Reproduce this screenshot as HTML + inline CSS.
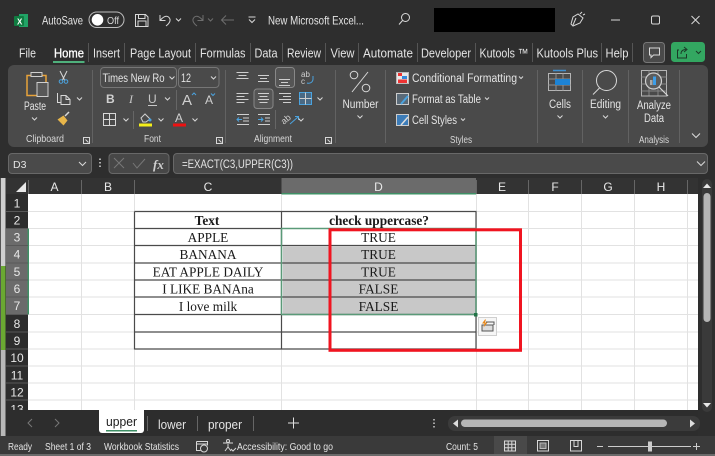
<!DOCTYPE html>
<html><head><meta charset="utf-8"><style>
html,body{margin:0;padding:0;background:#2e2e2e;width:715px;height:456px;overflow:hidden}
svg{display:block;position:absolute;left:0;top:0;filter:blur(.3px)}
text{font-family:"Liberation Sans",sans-serif;font-size:11px;fill:#e4e4e4}
.s{font-family:"Liberation Serif",serif;fill:#1a1a1a;font-size:13.3px;text-anchor:middle}
.h{fill:#e8e8e8;font-size:12px;text-anchor:middle}
.i{fill:none;stroke:#d0d0d0;stroke-width:1}
.c{fill:none;stroke:#d8d8d8;stroke-width:1}
.g{stroke:#e2e2e2;stroke-width:1}
.sp{stroke:#5e5e5e;stroke-width:1}
</style></head><body>
<svg width="715" height="456" viewBox="0 0 715 456" xmlns="http://www.w3.org/2000/svg">
<rect width="715" height="456" fill="#2e2e2e"/>

<!-- title bar -->
<path d="M19 14h9v13h-9z" fill="#21a366"/><rect x="14" y="16" width="10" height="10" rx="1" fill="#107c41"/>
<text x="17" y="24.500" style="font-size:8px;font-weight:bold;fill:#fff">X</text>
<text x="42" y="24.500" textLength="41" lengthAdjust="spacingAndGlyphs" style="font-size:12px">AutoSave</text>
<rect x="89" y="12" width="35" height="15.500" rx="7.700" fill="#2e2e2e" stroke="#bdbdbd"/>
<circle cx="97.500" cy="19.800" r="5.800" fill="#fff"/>
<text x="107" y="24" textLength="12" lengthAdjust="spacingAndGlyphs" style="font-size:10px;fill:#d8d8d8">Off</text>
<path class="c" d="M135.500 14.500h10l2.500 2.500v9.500h-12.500zM138.500 14.500v4h6.500v-4M138 26.500v-5.500h8v5.500"/>
<path class="c" d="M160 15v5.500h5.500M160 20.500c3-3.500 6-5.500 8.500-3.500c3 2.500 1.500 6-2.500 9"/>
<path class="c" d="M176 18.500l2.500 2.500l2.500-2.500"/>
<path fill="none" stroke="#6e6e6e" d="M203 15v5.500h-5.500M203 20.500c-3-3.500-6-5.500-8.500-3.500c-3 2.500-1.500 6 2.500 9"/>
<path fill="none" stroke="#6e6e6e" d="M208 18.500l2.500 2.500l2.500-2.500"/>
<path fill="none" stroke="#6e6e6e" d="M234 20h-12.500M226 15.500l-4.500 4.500l4.500 4.500"/>
<path class="c" d="M248.500 17h7M249 19.500l3 3l3-3"/>
<text x="268" y="24.500" textLength="96" lengthAdjust="spacingAndGlyphs" style="font-size:12px">New Microsoft Excel...</text>
<circle cx="405.500" cy="17.500" r="4" class="c"/><path class="c" d="M402.500 20.500l-3.500 4"/>
<rect x="434" y="8" width="121" height="24" fill="#000"/>
<path class="c" d="M571 24l2-7l5-3l5 4l-3 5l-7 3zM576 18l-3 7M580 14l2-2M583 15l2-1"/>
<path stroke="#d8d8d8" d="M611 20h9"/>
<rect x="651.500" y="16" width="8" height="8" rx="1.500" class="c"/>
<path class="c" d="M691.500 16l8 8M699.500 16l-8 8"/>

<!-- tabs -->
<text x="19" y="57.500" textLength="17" lengthAdjust="spacingAndGlyphs" style="font-size:12.500px">File</text>
<text x="54" y="57.500" textLength="30" lengthAdjust="spacingAndGlyphs" style="font-size:12.500px;fill:#fff;stroke:#fff;stroke-width:.3">Home</text>
<text x="93" y="57.500" textLength="27" lengthAdjust="spacingAndGlyphs" style="font-size:12.500px">Insert</text>
<text x="130" y="57.500" textLength="61" lengthAdjust="spacingAndGlyphs" style="font-size:12.500px">Page Layout</text>
<text x="200" y="57.500" textLength="45.500" lengthAdjust="spacingAndGlyphs" style="font-size:12.500px">Formulas</text>
<text x="254.500" y="57.500" textLength="23" lengthAdjust="spacingAndGlyphs" style="font-size:12.500px">Data</text>
<text x="287" y="57.500" textLength="34" lengthAdjust="spacingAndGlyphs" style="font-size:12.500px">Review</text>
<text x="330.500" y="57.500" textLength="24" lengthAdjust="spacingAndGlyphs" style="font-size:12.500px">View</text>
<text x="363" y="57.500" textLength="50" lengthAdjust="spacingAndGlyphs" style="font-size:12.500px">Automate</text>
<text x="421" y="57.500" textLength="50" lengthAdjust="spacingAndGlyphs" style="font-size:12.500px">Developer</text>
<text x="479.500" y="57.500" textLength="49" lengthAdjust="spacingAndGlyphs" style="font-size:12.500px">Kutools ™</text>
<text x="536.500" y="57.500" textLength="61.500" lengthAdjust="spacingAndGlyphs" style="font-size:12.500px">Kutools Plus</text>
<text x="605.500" y="57.500" textLength="23" lengthAdjust="spacingAndGlyphs" style="font-size:12.500px">Help</text>
<rect x="53" y="61" width="31.500" height="2" fill="#4fb07c"/>
<path stroke="#555" d="M88.500 43v19M124.500 43v19M195.500 43v19M250.500 43v19M282.500 43v19M325.500 43v19M358.500 43v19M417.500 43v19M475.500 43v19M532.500 43v19M601.500 43v19M632.500 43v19"/>
<rect x="643.500" y="42.500" width="21" height="20" rx="3" fill="#4a4a4a" stroke="#777"/>
<path class="c" d="M649.500 48h10v7h-6l-2.500 2.500v-2.500h-1.500z"/>
<rect x="671" y="42" width="34" height="20" rx="3.500" fill="#33a761"/>
<path fill="none" stroke="#1b3a28" d="M679 50h-1.500v8h9v-4M681 54c0-3 2-4.500 5-4.500M684 47l3 2.500l-3 2.500"/>
<path fill="none" stroke="#1b3a28" d="M696 51l2.500 2.500l2.500-2.500"/>

<!-- ribbon -->
<rect x="8" y="65" width="700" height="82" rx="6" fill="#4a4a4a"/>
<path stroke="#626262" d="M92.500 70v73M225.500 70v73M335.500 70v73M385.500 70v73M537.500 70v73M582.500 70v73M628.500 70v73M679.500 70v73"/>

<!-- clipboard -->
<path d="M27 75.500h19v20h-19z" fill="none" stroke="#e8a33a" stroke-width="1.500"/>
<rect x="31" y="72.500" width="11" height="4" fill="#4a4a4a" stroke="#cfcfcf"/>
<rect x="37" y="82.500" width="11" height="14" fill="#585858" stroke="#cfcfcf"/>
<text x="24" y="110" textLength="22" lengthAdjust="spacingAndGlyphs" style="font-size:11.500px">Paste</text>
<path class="c" d="M32 117.500l2.500 2.500l2.500-2.500"/>
<path class="c" d="M60 71l4.500 9M67 71l-4.500 9"/>
<circle cx="61" cy="81.500" r="1.800" fill="none" stroke="#4aa3df"/><circle cx="66" cy="81.500" r="1.800" fill="none" stroke="#4aa3df"/>
<path class="c" d="M57.500 93v9.500h4M61 95.500h5l4 4v5h-9zM66 95.500v4h4"/>
<path class="c" d="M77 97.500l2.500 2.500l2.500-2.500"/>
<path d="M57.500 119.500l6-4l4 5l-4 5z" fill="#e8b64a"/><path stroke="#d8d8d8" stroke-width="1.500" d="M65 116l4-4"/>
<text x="26" y="142" textLength="38" lengthAdjust="spacingAndGlyphs" style="font-size:10.500px;fill:#d8d8d8">Clipboard</text>
<path class="c" d="M83.500 137.500h6v6h-6zM85.500 139.500l3 3"/>

<!-- font -->
<rect x="100.500" y="67.500" width="76" height="20" rx="3.500" fill="#4a4a4a" stroke="#767676"/>
<rect x="178.500" y="67.500" width="40.500" height="20" rx="3.500" fill="#4a4a4a" stroke="#767676"/>
<text x="102.500" y="82" textLength="62" lengthAdjust="spacingAndGlyphs" style="font-size:11.500px">Times New Ro</text>
<path class="c" d="M169.500 76.500l2.500 2.500l2.500-2.500"/>
<text x="181" y="82" textLength="10" lengthAdjust="spacingAndGlyphs" style="font-size:11.500px">12</text>
<path class="c" d="M211 76.500l2.500 2.500l2.500-2.500"/>
<text x="106" y="103" style="font-size:12px;font-weight:bold;fill:#d0d0d0">B</text>
<text x="129" y="103" style="font-size:12px;font-style:italic;font-family:'Liberation Serif',serif;fill:#c8c8c8">I</text>
<text x="148" y="103" style="font-size:12px;fill:#c8c8c8">U</text><path stroke="#c8c8c8" d="M148 105.500h9"/>
<path class="c" d="M165 97.500l2.500 2.500l2.500-2.500"/>
<path stroke="#666" d="M176.500 90v20"/>
<text x="182" y="105" style="font-size:15px;fill:#d0d0d0">A</text><path fill="none" stroke="#4aa3df" d="M192 95l2-2l2 2"/>
<text x="205" y="104" style="font-size:12px;fill:#d0d0d0">A</text><path fill="none" stroke="#4aa3df" d="M211 93.500l2 2l2-2"/>
<path class="c" d="M103.500 113.500h12v12h-12zM109.500 113.500v12M103.500 119.500h12"/>
<path class="c" d="M123.500 118.500l2.500 2.500l2.500-2.500"/>
<path stroke="#666" d="M133.500 111v18"/>
<path fill="none" stroke="#d0d0d0" d="M141 118l4-4l5 5l-4 3h-3z"/><circle cx="150" cy="120" r="1.500" fill="#4aa3df"/>
<rect x="139" y="123.500" width="13" height="3" fill="#f4ee1a"/>
<path class="c" d="M158.500 118.500l2.500 2.500l2.500-2.500"/>
<text x="175" y="122" style="font-size:12px;fill:#d0d0d0">A</text>
<rect x="173" y="123.500" width="13" height="3" fill="#ee1111"/>
<path class="c" d="M192.500 118.500l2.500 2.500l2.500-2.500"/>
<text x="144" y="142" textLength="17" lengthAdjust="spacingAndGlyphs" style="font-size:10.500px;fill:#d8d8d8">Font</text>
<path class="c" d="M216.500 137.500h6v6h-6zM218.500 139.500l3 3"/>

<!-- alignment -->
<rect x="275.500" y="67.500" width="19" height="20" rx="3" fill="#555" stroke="#888"/>
<rect x="254" y="89" width="19" height="19.500" rx="3" fill="#555" stroke="#888"/>
<g stroke="#cfcfcf" stroke-width="1">
<path d="M236.500 72.500h12M238.500 75.500h8M236.500 78.500h12"/>
<path d="M258 75.500h11M260 78.500h7M258 81.500h11"/>
<path d="M279 79.500h11M281 82.500h7M279 85.500h11"/>
<path d="M236.500 93.500h12M236.500 96.500h8M236.500 99.500h12M236.500 102.500h8"/>
<path d="M258 93.500h11M259.500 96.500h8M258 99.500h11M259.500 102.500h8"/>
<path d="M279 93.500h12M283 96.500h8M279 99.500h12M283 102.500h8"/>
<path d="M237 114.500h12M243 118h6M243 121h6M237 124.500h12"/>
<path d="M258 114.500h12M265 118h5M265 121h5M258 124.500h12"/>
</g>
<path fill="none" stroke="#4aa3df" d="M237 119.500h5M239 117.500l-2 2l2 2M258 119.500h5M261 117.500l2 2l-2 2"/>
<text x="301" y="77" style="font-size:8px;fill:#d0d0d0">ab</text><text x="301" y="84" style="font-size:8px;fill:#d0d0d0">c</text>
<path fill="none" stroke="#4aa3df" d="M313 76v3c0 3-3 5-6 4"/>
<rect x="299.500" y="92.500" width="12" height="12" fill="#4a6a85" stroke="#4aa3df"/>
<path stroke="#d0d0d0" d="M299.500 98.500h12M305.500 92.500v12"/>
<path class="c" d="M317.500 97.500l2.500 2.500l2.500-2.500"/>
<path stroke="#666" d="M275.500 110v19"/>
<text x="281" y="123" transform="rotate(-40 285 120)" style="font-size:9px;fill:#d0d0d0">ab</text>
<path fill="none" stroke="#4aa3df" d="M290 124l8-7M295 116.500h3.500v3.500"/>
<path class="c" d="M298.500 118.500l2.500 2.500l2.500-2.500"/>
<text x="254" y="142" textLength="38" lengthAdjust="spacingAndGlyphs" style="font-size:10.500px;fill:#d8d8d8">Alignment</text>
<path class="c" d="M325.500 137.500h6v6h-6zM327.500 139.500l3 3"/>

<!-- number -->
<circle cx="354" cy="75" r="3.800" class="c"/><circle cx="366" cy="88" r="3.800" class="c"/><path stroke="#d8d8d8" d="M352 92l16-20"/>
<text x="342.500" y="108" textLength="36" lengthAdjust="spacingAndGlyphs" style="font-size:11.500px">Number</text>
<path class="c" d="M357.500 115.500l2.500 2.500l2.500-2.500"/>

<!-- styles -->
<rect x="396.500" y="72.500" width="12" height="11" fill="#e8e8e8" stroke="#bbb"/>
<rect x="398" y="73" width="4" height="3" fill="#e33"/><rect x="402" y="76" width="5" height="3" fill="#38d"/><rect x="398" y="79.500" width="9" height="3.500" fill="#e33"/>
<text x="412" y="82" textLength="105" lengthAdjust="spacingAndGlyphs" style="font-size:11.500px">Conditional Formatting</text>
<path class="c" d="M519 76.500l2 2l2-2"/>
<rect x="396.500" y="93.500" width="12" height="11" fill="#5a6a78" stroke="#ccc"/><path stroke="#4aa3df" stroke-width="2" d="M401 104l7-8"/>
<text x="412" y="103" textLength="69" lengthAdjust="spacingAndGlyphs" style="font-size:11.500px">Format as Table</text>
<path class="c" d="M485 97.500l2 2l2-2"/>
<rect x="396.500" y="114.500" width="12" height="11" fill="#3c7cb8" stroke="#ccc"/><path stroke="#ddd" stroke-width="1.500" d="M401 125l7-8"/>
<text x="412" y="124" textLength="45" lengthAdjust="spacingAndGlyphs" style="font-size:11.500px">Cell Styles</text>
<path class="c" d="M461 118.500l2 2l2-2"/>
<text x="450" y="143" textLength="22" lengthAdjust="spacingAndGlyphs" style="font-size:10.500px;fill:#d8d8d8">Styles</text>

<!-- cells -->
<path stroke="#3d8fd0" stroke-width="1.500" d="M553 70.500h13"/>
<rect x="548.500" y="73.500" width="22" height="17" fill="none" stroke="#b5b5b5"/>
<path stroke="#8e8e8e" d="M548.500 79h22M548.500 85h22M556 73.500v17M563 73.500v17"/>
<rect x="555" y="79" width="15" height="6" fill="#1d83d4"/>
<text x="549" y="108" textLength="22" lengthAdjust="spacingAndGlyphs" style="font-size:11.500px">Cells</text>
<path class="c" d="M557.500 115.500l2.500 2.500l2.500-2.500"/>

<!-- editing -->
<circle cx="606.500" cy="80.500" r="10" class="c"/><path class="c" d="M599.500 88l-6.500 6.500"/>
<text x="590" y="108" textLength="31" lengthAdjust="spacingAndGlyphs" style="font-size:11.500px">Editing</text>
<path class="c" d="M603 115.500l2.500 2.500l2.500-2.500"/>

<!-- analyze -->
<rect x="641.500" y="70.500" width="25" height="25.500" fill="#4a4a4a" stroke="#b5b5b5"/>
<path stroke="#858585" d="M641.500 77h25M641.500 84h25M641.500 91h25M649 70.500v25M658 70.500v25"/>
<circle cx="653.500" cy="81" r="8" fill="#5c5c5c" stroke="#d0d0d0" stroke-width="1.200"/>
<rect x="650" y="80" width="2.500" height="5" fill="#aaa"/><rect x="653" y="76.500" width="3" height="8.500" fill="#3d9ee8"/>
<path stroke="#d8d8d8" stroke-width="1.200" d="M659 87l9 9"/>
<text x="637" y="109" textLength="34" lengthAdjust="spacingAndGlyphs" style="font-size:11.500px">Analyze</text>
<text x="644" y="122" textLength="20" lengthAdjust="spacingAndGlyphs" style="font-size:11.500px">Data</text>
<text x="639" y="143" textLength="30" lengthAdjust="spacingAndGlyphs" style="font-size:10.500px;fill:#d8d8d8">Analysis</text>
<path fill="none" stroke="#ddd" d="M692 133.500l4 4l4-4"/>

<!-- formula bar -->
<rect x="8.500" y="153.500" width="83" height="20" rx="3.500" fill="#4a4a4a" stroke="#686868"/>
<text x="13" y="168" style="font-size:10.500px">D3</text>
<path class="c" d="M79 162l3.500 3.500l3.500-3.500"/>
<path stroke="#d8d8d8" stroke-dasharray="1.500 2" stroke-width="1.500" d="M100 158.500v10"/>
<rect x="109" y="153.500" width="60" height="20" rx="3.500" fill="#474747" stroke="#686868"/>
<path fill="none" stroke="#777" d="M114 158l10 10M124 158l-10 10M133 163l4 5l8-9"/>
<text x="153" y="169" style="font-size:13px;font-style:italic;font-weight:bold;font-family:'Liberation Serif',serif;fill:#cfcfcf">fx</text>
<rect x="173.500" y="153.500" width="534" height="20" rx="3.500" fill="#4a4a4a" stroke="#686868"/>
<text x="182" y="168" textLength="111" lengthAdjust="spacingAndGlyphs" style="font-size:11.500px">=EXACT(C3,UPPER(C3))</text>
<path class="c" d="M697 161.500l4 4l4-4"/>

<!-- sheet -->
<rect x="28" y="194" width="670" height="216" fill="#fff"/>
<g class="g">
<path d="M28 211.500h670M28 228.500h670M28 245.500h670M28 263h670M28 280h670M28 297h670M28 314.500h670M28 332h670M28 349h670M28 366h670M28 383h670M28 400h670"/>
<path d="M81.500 194v216M134.500 194v216M281.500 194v216M476.500 194v216M528.500 194v216M581.500 194v216M634.500 194v216M687.500 194v216"/>
</g>

<!-- left strip -->
<rect x="0" y="178" width="1" height="258" fill="#555"/>
<rect x="1" y="178" width="4.500" height="88" fill="#cfcfcf"/>
<rect x="1" y="266" width="4.500" height="84" fill="#6aa832"/>
<rect x="1" y="350" width="4.500" height="86" fill="#b8b8b8"/>

<!-- headers -->
<rect x="6" y="178" width="692" height="16" fill="#333"/>
<rect x="6" y="194" width="22" height="216" fill="#2d2d2d"/>
<rect x="281.500" y="178" width="194.500" height="15" fill="#6b6b6b"/>
<rect x="281.500" y="193" width="194.500" height="1.500" fill="#3f9066"/>
<rect x="6" y="228.500" width="22" height="86" fill="#6b6b6b"/>
<rect x="27.500" y="228.500" width="1.500" height="86" fill="#3f9066"/>
<path d="M26 182v10h-10z" fill="#e8e8e8"/>
<path stroke="#666" d="M28.500 180v14M81.500 180v14M134.500 180v14M476.500 180v14M528.500 180v14M581.500 180v14M634.500 180v14M687.500 180v14"/>
<path stroke="#585858" d="M6 211.500h22M6 228.500h22M6 245.500h22M6 263h22M6 280h22M6 297h22M6 314.500h22M6 332h22M6 349h22M6 366h22M6 383h22M6 400h22"/>
<text class="h" x="54.500" y="191">A</text><text class="h" x="108" y="191">B</text><text class="h" x="208" y="191">C</text><text class="h" x="378.500" y="191">D</text><text class="h" x="502" y="191">E</text><text class="h" x="555" y="191">F</text><text class="h" x="608" y="191">G</text><text class="h" x="661" y="191">H</text>
<text class="h" x="17" y="207.500">1</text><text class="h" x="17" y="224.500">2</text><text class="h" x="17" y="241.500">3</text><text class="h" x="17" y="258.500">4</text><text class="h" x="17" y="276">5</text><text class="h" x="17" y="293">6</text><text class="h" x="17" y="310">7</text><text class="h" x="17" y="328">8</text><text class="h" x="17" y="345">9</text><text class="h" x="17" y="362">10</text><text class="h" x="17" y="379.500">11</text><text class="h" x="17" y="396.500">12</text><text class="h" x="17" y="413.500">13</text>

<!-- table -->
<rect x="283" y="246.500" width="192.500" height="67.500" fill="#c8c8c8"/>
<g fill="none" stroke="#4a4a4a" stroke-width="1.200">
<path d="M134.500 211.500h342M134.500 228.500h147M134.500 245.500h342M134.500 263h342M134.500 280h342M134.500 297h342M134.500 314.500h342M134.500 332h342M134.500 349h342"/>
<path d="M134.500 211.500v138M281.500 211.500v138M476 211.500v138"/>
</g>
<path fill="none" stroke="#5a9a78" stroke-width="1.500" d="M281.500 228.500h194.500v86h-194.500z"/>
<rect x="474" y="313" width="3.500" height="3.500" fill="#217346"/>
<text class="s" x="207" y="225" style="font-weight:bold">Text</text>
<text class="s" x="379" y="225" style="font-weight:bold">check uppercase?</text>
<text class="s" x="208" y="242">APPLE</text><text class="s" x="208" y="259">BANANA</text><text class="s" x="208" y="276.500">EAT APPLE DAILY</text><text class="s" x="208" y="293.500">I LIKE BANAna</text><text class="s" x="208" y="311">I love milk</text>
<text class="s" x="378.500" y="242">TRUE</text><text class="s" x="378.500" y="259">TRUE</text><text class="s" x="378.500" y="276.500">TRUE</text><text class="s" x="378.500" y="293.500">FALSE</text><text class="s" x="378.500" y="311">FALSE</text>

<!-- quick analysis -->
<rect x="478.500" y="317.500" width="18" height="18" fill="#f6f6f6" stroke="#cfcfcf"/>
<rect x="482" y="325" width="11" height="6" fill="#ddd" stroke="#555"/><path fill="none" stroke="#555" d="M486 322h8v3"/>
<path d="M485 319.500l-3 4h2.500l-1 4l4-5h-2.500l1-3z" fill="#e8891c"/>

<!-- red box -->
<rect x="330" y="229.800" width="190.500" height="120.500" fill="none" stroke="#f01420" stroke-width="3"/>

<!-- scrollbar -->
<rect x="698" y="178" width="17" height="258" fill="#2e2e2e"/>
<rect x="702" y="179" width="10" height="233" rx="5" fill="#3a3a3a"/>
<rect x="703.500" y="193" width="7" height="129" rx="3.500" fill="#b5b5b5"/>
<path d="M703 188l4-4.500l4 4.500z" fill="#e8e8e8"/><path d="M703 403l4 4.500l4-4.500z" fill="#e8e8e8"/>

<!-- tabs bar -->
<rect x="6" y="410" width="692" height="26" fill="#2d2d2d"/>
<path d="M99 410h45v20a3 3 0 0 1-3 3h-39a3 3 0 0 1-3-3z" fill="#fff"/>
<text x="106" y="426" textLength="31" lengthAdjust="spacingAndGlyphs" style="font-size:13px;fill:#1a1a1a">upper</text>
<rect x="106" y="430" width="31" height="1.500" fill="#3f9066"/>
<text x="158" y="429" textLength="28" lengthAdjust="spacingAndGlyphs" style="font-size:13px">lower</text>
<text x="208" y="429" textLength="34" lengthAdjust="spacingAndGlyphs" style="font-size:13px">proper</text>
<path stroke="#666" d="M147.500 416v15M197.500 416v15M253.500 416v15"/>
<path stroke="#e0e0e0" d="M288 423h11M293.500 417.500v11"/>
<path fill="none" stroke="#777" d="M32 419l-4 4l4 4M55 419l4 4l-4 4"/>
<path stroke="#ccc" stroke-width="1.500" stroke-dasharray="1.500 2" d="M434 419v10"/>
<rect x="448" y="416" width="252" height="15" rx="7" fill="#3b3b3b"/>
<rect x="461" y="419.500" width="206" height="7.500" rx="3.700" fill="#b5b5b5"/>
<path d="M458 419.500v8l-5-4z" fill="#ddd"/><path d="M690 419.500v8l5-4z" fill="#ddd"/>

<!-- status bar -->
<rect x="0" y="436" width="715" height="18" fill="#3a3a3a"/>
<rect x="0" y="454" width="715" height="2" fill="#6a6a6a"/>
<text x="8" y="450" textLength="24" lengthAdjust="spacingAndGlyphs" style="font-size:10.500px">Ready</text>
<text x="45" y="450" textLength="46" lengthAdjust="spacingAndGlyphs" style="font-size:10.500px">Sheet 1 of 3</text>
<text x="104" y="450" textLength="75" lengthAdjust="spacingAndGlyphs" style="font-size:10.500px">Workbook Statistics</text>
<text x="237" y="450" textLength="96" lengthAdjust="spacingAndGlyphs" style="font-size:10.500px">Accessibility: Good to go</text>
<text x="446" y="450" textLength="32" lengthAdjust="spacingAndGlyphs" style="font-size:10.500px">Count: 5</text>
<path class="c" d="M196.500 441.500h11v4M196.500 441.500v9h4M196.500 444h11"/><circle cx="204" cy="448.500" r="3.500" class="c"/>
<circle cx="228" cy="441" r="1.500" class="c"/><path class="c" d="M223 443h10M228 444v3l-3 4M228 447l3 4M231 449l2 2l3-3"/>
<rect x="494" y="436" width="33" height="18" fill="#494949"/>
<path class="c" d="M504.500 441h11v10h-11zM504.500 444.300h11M504.500 447.700h11M508.200 441v10M511.800 441v10"/>
<rect x="537.500" y="440.500" width="11" height="10.500" class="c"/><rect x="540" y="443" width="6" height="5.500" fill="#777" stroke="#bbb"/>
<path class="c" d="M570.500 440.500h11v10.500h-11zM574 440.500v6h4v-6"/>
<path stroke="#ccc" d="M597 446.500h6M693 446.500h7M696.500 443v7"/>
<path stroke="#ccc" d="M608 446.500h83"/>
<rect x="648" y="441.500" width="4" height="10" fill="#ccc"/>
</svg>
</body></html>
